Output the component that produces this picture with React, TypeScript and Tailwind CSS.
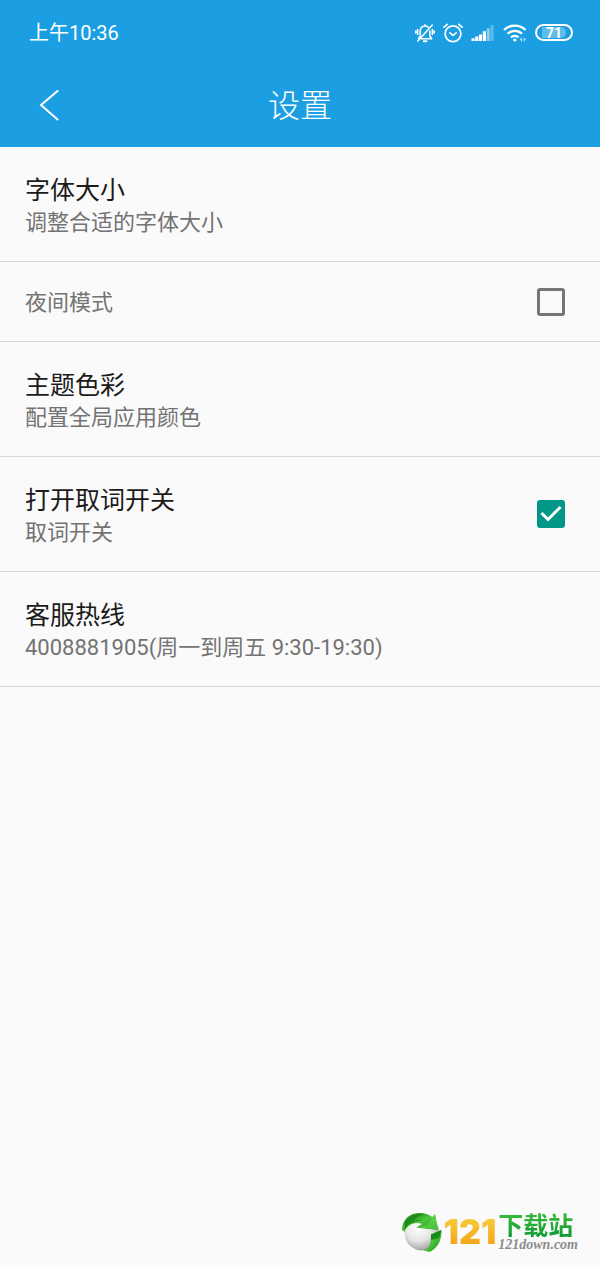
import { useState } from 'react';

type Item = {
  id: string;
  title?: string;
  summary: string;
  toggle?: boolean;
};

const items: Item[] = [
  { id: 'font-size', title: '字体大小', summary: '调整合适的字体大小' },
  { id: 'night-mode', summary: '夜间模式', toggle: true },
  { id: 'theme', title: '主题色彩', summary: '配置全局应用颜色' },
  { id: 'word-lookup', title: '打开取词开关', summary: '取词开关', toggle: true },
  { id: 'hotline', title: '客服热线', summary: '4008881905(周一到周五 9:30-19:30)' },
];

function BellOffIcon() {
  return (
    <svg className="h-5 w-5" viewBox="0 0 20 20" fill="none" stroke="currentColor" strokeWidth="1.6" strokeLinecap="round" strokeLinejoin="round">
      <path d="M5.200 12V8.300C5.200 5 7.200 3 10 3c1.300 0 2.400.400 3.200 1.100M14.800 8v5l1.800 2.800H6.500M3.600 15.700l1.500-2.300M10 3V1.800" />
      <path d="M8.800 18.300h2.600" strokeWidth="2" />
      <path d="M17.300 2 2.800 18" />
      <path d="M2.600 6.500v5M.8 8v2M17.400 6.500v5M19.200 8v2" />
    </svg>
  );
}

function AlarmIcon() {
  return (
    <svg className="h-5 w-5" viewBox="0 0 20 20" fill="none" stroke="currentColor" strokeWidth="1.7" strokeLinecap="round" strokeLinejoin="round">
      <circle cx="10" cy="10.8" r="7.9" />
      <path d="m6.9 9.8 3.1 2.6 3.2-2.6" />
      <path d="M1 4.2 4.2 1.3M19 4.2l-3.2-2.9" />
    </svg>
  );
}

function SignalIcon() {
  return (
    <svg className="h-5 w-6" viewBox="0 0 24 20" fill="currentColor">
      <path d="M.5 15.300h3.200V18H.5zM4.200 13.500h3.200V18H4.200zM7.900 11.500h3.200V18H7.900zM11.800 8.300H15V18h-3.200z" />
      <path d="M15.700 5.300h3V18h-3z" opacity=".5" />
      <path d="M19.500 2.300h3V18h-3z" opacity=".3" />
    </svg>
  );
}

function WifiIcon() {
  return (
    <svg className="h-5 w-6" viewBox="0 0 24 20" fill="none" stroke="currentColor" strokeWidth="2.3">
      <path d="M1 7a15.500 15.500 0 0 1 21.600 0M4.600 10.800a10.200 10.200 0 0 1 14.400 0M8 14.400a5.400 5.400 0 0 1 7.600 0" />
      <circle cx="11.8" cy="17" r="1.6" fill="currentColor" stroke="none" />
      <path d="m17 16.6 1.8-2.3v4.6zM22.6 16.6l-1.9 2.3v-4.6z" fill="currentColor" stroke="none" opacity=".8" />
    </svg>
  );
}

function GlobeLogo() {
  return (
    <svg className="h-10 w-10" viewBox="0 0 40 40">
      <defs>
        <radialGradient id="ball" cx=".4" cy=".35" r=".65">
          <stop offset="0" stopColor="#ffffff" />
          <stop offset=".6" stopColor="#e4e4e4" />
          <stop offset="1" stopColor="#a3a3a3" />
        </radialGradient>
        <linearGradient id="leaf" x1="0" y1="0" x2="1" y2="1">
          <stop offset="0" stopColor="#137a13" />
          <stop offset=".5" stopColor="#4fc63c" />
          <stop offset="1" stopColor="#128b16" />
        </linearGradient>
      </defs>
      <circle cx="20" cy="21" r="17.500" fill="url(#ball)" />
      <path d="M0 18C0 10 5 4 11 2c7-2 14-1 19.500 3L33 2l3 16-22-2.500 6-3.500C12 9 5 13 2.500 20z" fill="url(#leaf)" />
      <path d="M3 10C8 3 17 1 24 2.500c-6 0-10 2.500-12 6.500 3-1.500 6-1.500 9 0-8-1-15 2-18.500 9.500z" fill="#1c8a1c" />
      <path d="m30.500 5 2.500-3 3 16-18-2.500 8-3z" fill="#65dc4d" opacity=".6" />
      <path d="M29 22.500 39.500 18c.5 10-4 18-11 21.500-2 .500-5 0-7-1.500 5-1 8-5 7.500-15.500z" fill="url(#leaf)" />
      <path d="m29 22.500 10.500-4.500-2.500 8-8 2z" fill="#178a1c" />
    </svg>
  );
}

function Row({ item, checked, onToggle }: { item: Item; checked: boolean; onToggle: () => void }) {
  const text = (
    <span className="flex flex-1 flex-col pt-[26px] pb-[23px]">
      {item.title && <span className="text-[25px] leading-[35px] text-[#1b1b1b]">{item.title}</span>}
      <span className="text-[22px] leading-[30px] text-[#737373]">{item.summary}</span>
    </span>
  );

  if (!item.toggle) {
    return (
      <button type="button" className="flex w-full items-center px-[25px] text-left">
        {text}
      </button>
    );
  }

  return (
    <label htmlFor={item.id} className="flex w-full items-center pl-[25px] pr-[35px]">
      {text}
      <span className="grid h-7 w-7 place-items-center">
        <input
          id={item.id}
          type="checkbox"
          checked={checked}
          onChange={onToggle}
          className="col-start-1 row-start-1 h-7 w-7 appearance-none rounded-[3px] border-3 border-[#757575] checked:border-[#009688] checked:bg-[#009688]"
        />
        {checked && (
          <svg className="pointer-events-none col-start-1 row-start-1 h-7 w-7 text-white" viewBox="0 0 28 28" fill="none" stroke="currentColor" strokeWidth="3">
            <path d="m4.500 13 6.500 6.500L23.500 7" />
          </svg>
        )}
      </span>
    </label>
  );
}

export default function App() {
  const [enabled, setEnabled] = useState<Record<string, boolean>>({ 'word-lookup': true });

  const toggle = (id: string) => setEnabled((prev) => ({ ...prev, [id]: !prev[id] }));

  return (
    <div className="flex min-h-screen flex-col bg-[#fafafa] font-['Roboto','Noto_Sans_CJK_SC',sans-serif]">
      <header className="bg-[#1c9fe2] text-white">
        {/* Status bar */}
        <div className="flex h-[65px] items-center justify-between pl-[29px] pr-[27px]">
          <span className="text-xl">上午10:36</span>
          <div className="flex items-center gap-2">
            <BellOffIcon />
            <AlarmIcon />
            <SignalIcon />
            <WifiIcon />
            <span className="flex h-[17px] w-[38px] items-center justify-center rounded-full border-2 border-white">
              <span className="flex h-[11px] w-6 items-center justify-center rounded-r-full bg-white/30 text-sm font-bold leading-none">71</span>
            </span>
          </div>
        </div>

        {/* Title bar */}
        <div className="grid h-[82px] grid-cols-[1fr_auto_1fr] items-center px-[25px]">
          <button type="button" aria-label="返回" className="flex h-12 w-12 items-center justify-center">
            <svg className="h-8 w-5" viewBox="0 0 20 32" fill="none" stroke="currentColor" strokeWidth="2" strokeLinecap="round" strokeLinejoin="round">
              <path d="M18.500 1 2 15l16.500 14.500" />
            </svg>
          </button>
          <h1 className="text-[32px] font-light leading-10">设置</h1>
        </div>
      </header>

      <ul>
        {items.map((item) => (
          <li key={item.id} className="border-b border-[#d6d6d6]">
            <Row item={item} checked={!!enabled[item.id]} onToggle={() => toggle(item.id)} />
          </li>
        ))}
      </ul>

      {/* Site mark */}
      <a href="#" className="mb-3.5 mr-[22px] mt-auto flex items-center gap-0.5 self-end">
        <GlobeLogo />
        <span className="bg-linear-to-b from-[#f7d43c] to-[#f39a12] bg-clip-text font-['Inter',sans-serif] text-[34px] font-black leading-10 text-transparent">121</span>
        <span className="flex flex-col">
          <span className="bg-linear-to-b from-[#3cc03c] to-[#0a9a34] bg-clip-text font-['Noto_Sans_CJK_SC',sans-serif] text-[25px] font-bold leading-[26px] text-transparent">下载站</span>
          <span className="font-['Liberation_Serif',serif] text-sm font-bold italic leading-4 text-[#8c8c8c]">121down.com</span>
        </span>
      </a>
    </div>
  );
}
